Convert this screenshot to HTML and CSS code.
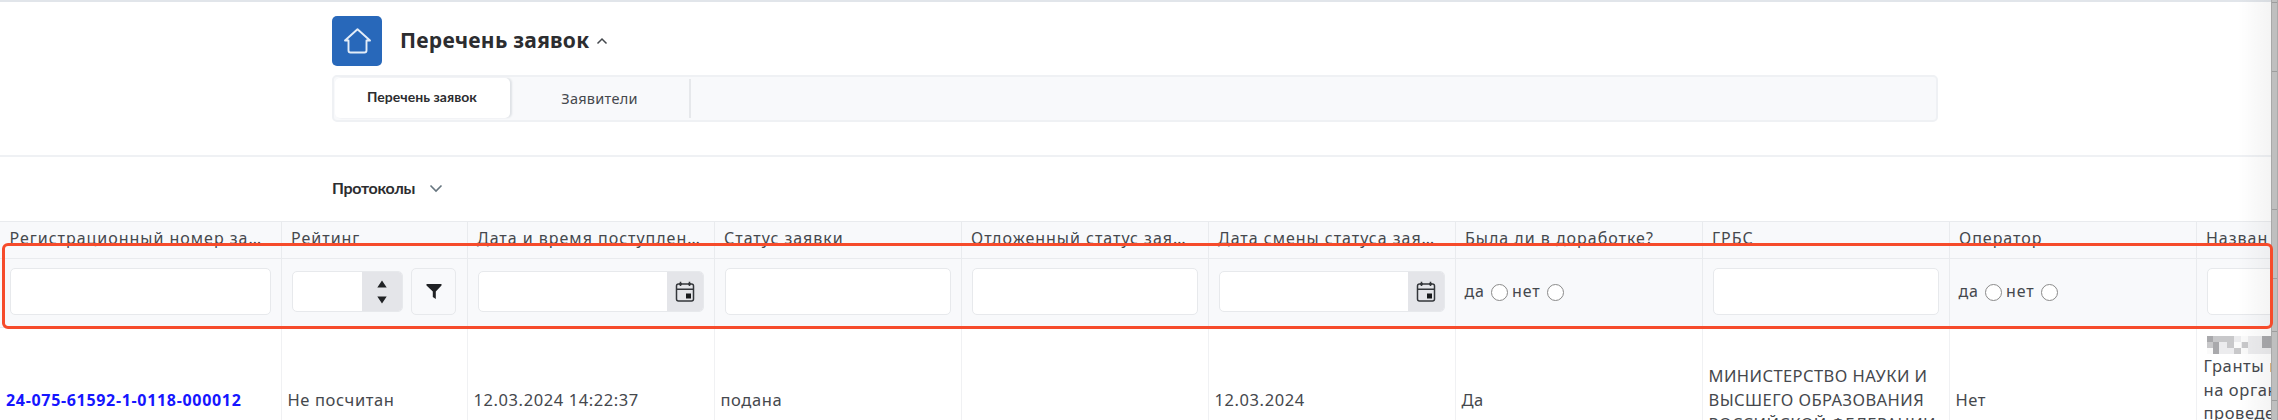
FILE: index.html
```
<!DOCTYPE html>
<html lang="ru">
<head>
<meta charset="utf-8">
<title>Перечень заявок</title>
<link rel="stylesheet" href="styles.css">
</head>
<body>
<header class="top">
  <div class="heading">
    <span class="home"><svg width="50" height="50" viewBox="0 0 50 50"><path d="M13 24.500L25.500 13.200L38 24.500H34.500V34.500Q34.500 36.500 32.500 36.500H18.500Q16.500 36.500 16.500 34.500V24.500Z" fill="none" stroke="#e4edf8" stroke-width="1.900" stroke-linejoin="round"/></svg></span>
    <h1>Перечень заявок</h1>
    <svg class="up" width="12" height="8" viewBox="0 0 12 8"><path d="M1.500 6.500L6 2L10.500 6.500" fill="none" stroke="#44484d" stroke-width="1.500"/></svg>
  </div>
  <nav class="tabs"><span class="tab active">Перечень заявок</span><span class="tab">Заявители</span></nav>
</header>
<section class="protocols"><b>Протоколы</b><svg width="14" height="9" viewBox="0 0 14 9"><path d="M1.500 1.500L7 7L12.500 1.500" fill="none" stroke="#66757f" stroke-width="1.600"/></svg></section>
<main class="grid">
  <div class="row head">
    <div>Регистрационный номер за…</div><div>Рейтинг</div><div>Дата и время поступлен…</div><div>Статус заявки</div><div>Отложенный статус зая…</div><div>Дата смены статуса зая…</div><div>Была ли в доработке?</div><div>ГРБС</div><div>Оператор</div><div>Назван</div>
  </div>
  <div class="row filters">
    <div><i class="input"></i></div>
    <div><i class="input short"><span class="spin"><svg width="12" height="26" viewBox="0 0 12 26"><path d="M1.300 8.500L6 1.500L10.700 8.500ZM1.300 17.500H10.700L6 24.500Z" fill="#202225"/></svg></span></i><span class="funnel"><svg width="16" height="17" viewBox="0 0 16 17"><path d="M.5 1H15.500V2.500L9.800 8.500V16L6.800 14V8.500L.5 2.500Z" fill="#202225"/></svg></span></div>
    <div><i class="input short"><span class="cal"><svg width="20" height="22" viewBox="0 0 20 22"><rect x="1.500" y="3" width="17" height="17" rx="2" fill="none" stroke="#33363a" stroke-width="1.500"/><path d="M1.500 8.300H18.500M5.500 .8V5M14.500 .8V5M4 3H7M13 3H16" stroke="#33363a" stroke-width="1.600"/><rect x="11" y="12.500" width="5" height="5" fill="#17191b"/></svg></span></i></div>
    <div><i class="input"></i></div>
    <div><i class="input"></i></div>
    <div><i class="input short"><span class="cal"><svg width="20" height="22" viewBox="0 0 20 22"><rect x="1.500" y="3" width="17" height="17" rx="2" fill="none" stroke="#33363a" stroke-width="1.500"/><path d="M1.500 8.300H18.500M5.500 .8V5M14.500 .8V5M4 3H7M13 3H16" stroke="#33363a" stroke-width="1.600"/><rect x="11" y="12.500" width="5" height="5" fill="#17191b"/></svg></span></i></div>
    <div class="choice">да<i class="radio"></i>нет<i class="radio"></i></div>
    <div><i class="input"></i></div>
    <div class="choice">да<i class="radio"></i>нет<i class="radio"></i></div>
    <div><i class="input"></i></div>
  </div>
  <div class="row data">
    <div><a>24-075-61592-1-0118-000012</a></div><div>Не посчитан</div><div>12.03.2024 14:22:37</div><div>подана</div><div></div><div>12.03.2024</div><div>Да</div>
    <div class="caps">МИНИСТЕРСТВО НАУКИ И<br>ВЫСШЕГО ОБРАЗОВАНИЯ<br>РОССИЙСКОЙ ФЕДЕРАЦИИ</div><div>Нет</div>
    <div class="name"><svg class="mosaic" width="64" height="18" viewBox="0 0 64 18" shape-rendering="crispEdges"><path d="M0 0H64V18H0Z" fill="#ececee"/><path d="M0 0H6V6H0ZM6 6H12V18H6ZM55 0H64V12H55Z" fill="#a9a9ac"/><path d="M6 0H13V6H6ZM13 0H27V6H13ZM20 6H27V12H20ZM35 6H41V12H35ZM27 12H34V18H27ZM0 6H6V12H0Z" fill="#c8c8ca"/><path d="M0 12H6V18H0ZM27 6H34V12H27ZM34 0H41V6H34ZM34 12H41V18H34Z" fill="#fafafa"/></svg>Гранты и<br>на орган<br>проведе</div>
  </div>
</main>
<div class="highlight"></div>
<div class="shade"></div>
<aside class="edge"></aside>
</body>
</html>
```
FILE: styles.css
```
* { box-sizing: border-box; }
body {
  margin: 0;
  width: 2278px;
  height: 420px;
  overflow: hidden;
  position: relative;
  background: #fff;
  color: #45484d;
  font: 16px/24px "Noto Sans", "Open Sans", sans-serif;
}
svg { display: block; flex: none; }

.top { height: 157px; padding: 14px 0 0 332px; border-top: 2px solid #e1e5ea; border-bottom: 2px solid #eff1f4; }
.heading { display: flex; align-items: center; height: 50px; }
.home { width: 50px; height: 50px; border-radius: 5px; background: #2868ba; }
h1 { margin: 0 0 2px 18px; font-size: 21px; line-height: 30px; letter-spacing: .26px; color: #2c2d30; }
.up { margin-left: 7px; }
.tabs { display: flex; width: 1606px; height: 47px; margin-top: 9px; padding: 2px; border: 2px solid #eff1f4; border-radius: 5px; background: #f8f9fb; }
.tab { display: flex; align-items: center; justify-content: center; width: 179px; padding-bottom: 2px; border-right: 2px solid #e6e8eb; font-size: 14.5px; letter-spacing: .25px; }
.tab.active { width: 175px; margin: -1px 0 0 -1px; height: 40px; padding-right: 1px; border: 0; border-radius: 5px; background: #fff; box-shadow: 2px 0 2px #dfe2e6; color: #2c2d30; font: bold 14px/20px Lato, sans-serif; letter-spacing: .04px; }
.tab + .tab { width: 181px; }

.protocols { display: flex; align-items: center; gap: 14px; height: 64px; padding: 0 0 2px 332px; color: #2c2d30; }
.protocols b { font: bold 16px/24px Lato, sans-serif; letter-spacing: -.3px; }

.grid { width: 2278px; height: 199px; overflow: hidden; border-top: 1px solid #e9ebee; }
.row { display: grid; grid-template-columns: 281.5px 186px repeat(8, 247px); }
.row > div { display: flex; align-items: center; border-right: 1px solid #e9ebee; white-space: nowrap; }
.head { height: 37px; background: #f8f9fb; border-bottom: 1px solid #e9ebee; letter-spacing: .98px; }
.head > div { padding: 0 0 4px 9.500px; }
.filters { height: 69px; background: #f8f9fb; border-bottom: 1px solid #e9ebee; }
.filters > div { gap: 8px; padding: 0 9.500px 3px 10px; }
.input { flex: 1; height: 47px; border: 1px solid #e7e9ec; border-radius: 5px; background: #fff; overflow: hidden; }
.input.short { height: 41px; display: flex; justify-content: flex-end; }
.spin, .cal { display: flex; align-items: center; justify-content: center; width: 40px; background: #e4e5e9; }
.cal { width: 36px; }
.funnel { display: flex; align-items: center; justify-content: center; width: 45px; height: 47px; margin-right: 1px; border: 1px solid #e7e9ec; border-radius: 5px; }
.filters .choice { gap: 0; padding: 0 0 5px 9px; letter-spacing: .9px; }
.radio { flex: none; width: 17px; height: 17px; margin: 3px 4px 0 6px; border: 1px solid #8a8a8a; border-radius: 50%; background: #fff; }

.data { height: 144px; font-size: 16.500px; letter-spacing: .59px; }
.data > div { padding-left: 6px; border-color: #f0f1f3; }
.data a { font-size: 16px; font-weight: bold; letter-spacing: .68px; color: #1616ff; }
.data .caps { letter-spacing: .43px; }
.data > .name { display: block; padding: 8px 0 0 7px; line-height: 23.500px; }
.mosaic { margin: 0 0 0 3px; }

.highlight { position: absolute; left: 2px; top: 243px; width: 2271px; height: 86px; border: 3px solid #f64b2b; border-radius: 6px; z-index: 2; }
.shade { position: absolute; top: 0; right: 7px; width: 34px; height: 420px; background: linear-gradient(90deg, transparent, rgba(0, 0, 0, .045)); }
.edge {
  position: absolute; top: 0; right: 0; width: 7px; height: 420px;
  border-left: 1px solid #a8a8a8; border-right: 1px solid #aaa;
  background:
    linear-gradient(#9d9d9d, #9d9d9d) 0 2px / 100% 1px no-repeat,
    linear-gradient(#9d9d9d, #9d9d9d) 0 71px / 100% 1px no-repeat,
    linear-gradient(#9d9d9d, #9d9d9d) 0 209px / 100% 1px no-repeat,
    linear-gradient(#9d9d9d, #9d9d9d) 0 278px / 100% 1px no-repeat,
    linear-gradient(#9d9d9d, #9d9d9d) 0 331px / 100% 1px no-repeat,
    linear-gradient(#9d9d9d, #9d9d9d) 0 400px / 100% 1px no-repeat,
    #bfbfbf;
}
```
